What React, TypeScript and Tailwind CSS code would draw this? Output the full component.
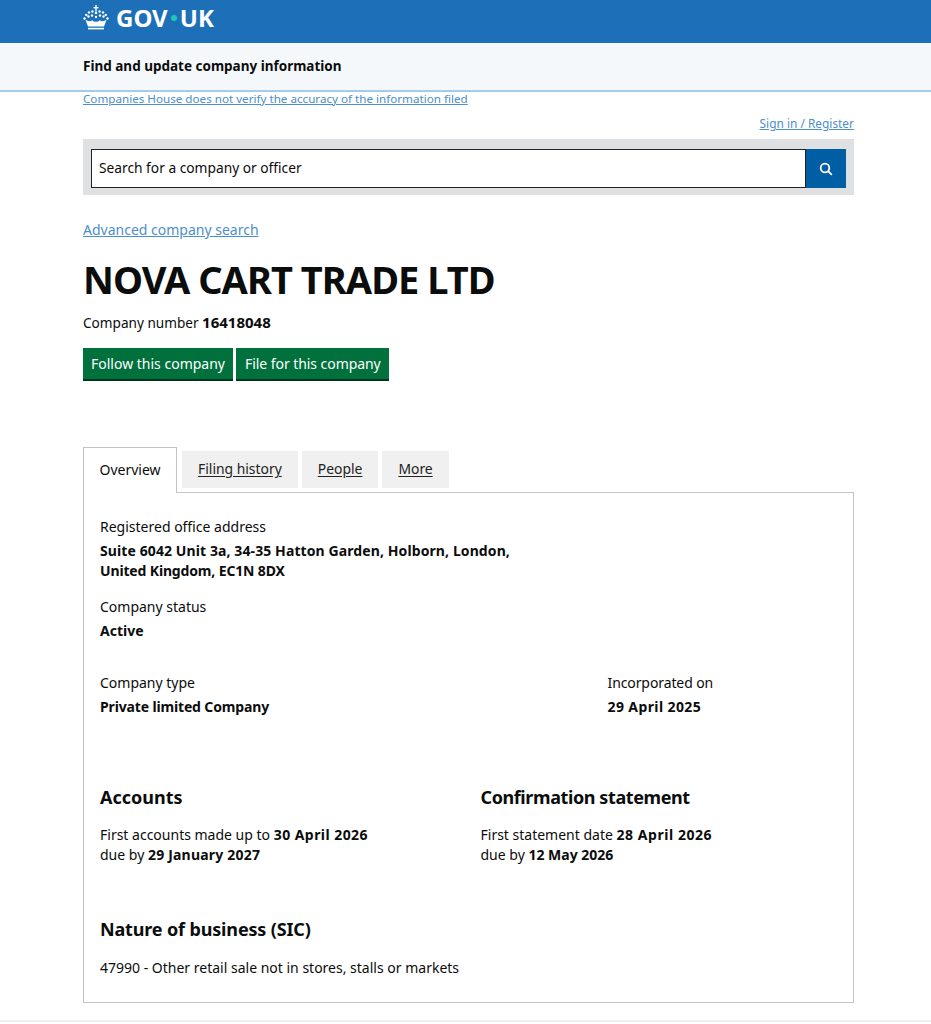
import React from "react";

const font = { fontFamily: '"Noto Sans", Arial, sans-serif' };

const Crown = () => (
  <svg width="26" height="26" viewBox="0 0 26 26" fill="white" aria-hidden="true">
    <rect x="12.300" y="0" width="1.400" height="6.500" />
    <rect x="10.500" y="2" width="5" height="1.400" />
    <circle cx="13" cy="8" r="1.200" />
    <circle cx="9.500" cy="6.500" r="1.200" />
    <circle cx="16.500" cy="6.500" r="1.200" />
    <circle cx="6" cy="7.500" r="1.200" />
    <circle cx="20" cy="7.500" r="1.200" />
    <circle cx="3.300" cy="10" r="1.200" />
    <circle cx="22.700" cy="10" r="1.200" />
    <circle cx="1.500" cy="13.500" r="1.200" />
    <circle cx="24.500" cy="13.500" r="1.200" />
    <circle cx="9" cy="10.500" r="1.200" />
    <circle cx="17" cy="10.500" r="1.200" />
    <circle cx="13" cy="12" r="1.200" />
    <circle cx="5.500" cy="11.500" r="1.200" />
    <circle cx="20.500" cy="11.500" r="1.200" />
    <path d="M2.500 15c3 1.500 5 1.500 7 .2.800 1 2 1.600 3.500 1.600s2.700-.6 3.500-1.600c2 1.300 4 1.300 7-.2l-2.500 6.500h-16z" />
    <rect x="5" y="22.800" width="16" height="1.600" />
  </svg>
);

const Tab = ({ label }: { label: string }) => (
  <a className="flex h-[37px] items-center bg-[#f0f0f0] px-[16px] pb-[1px] text-[13.900px] text-[#222] underline underline-offset-2">
    {label}
  </a>
);

const App = () => {
  return (
    <div className="min-h-[1024px] bg-white text-[#0b0c0c]" style={font}>
      <header className="h-[43px] bg-[#1d70b8] pl-[83px]">
        <div className="flex h-[36px] items-center text-white">
          <Crown />
          <span className="ml-[7px] text-[24px] font-bold leading-none">GOV</span>
          <span className="mx-[3px] h-[6px] w-[6px] rounded-full bg-[#1fc8b4]" />
          <span className="text-[24px] font-bold leading-none">UK</span>
        </div>
      </header>
      <div className="flex h-[47px] items-center bg-[#f4f8fb] pl-[83px] text-[13.500px] font-bold">
        Find and update company information
      </div>
      <div className="h-[2px] bg-[#a4cbec]" />

      <main className="ml-[83px] mr-[77px]">
        <a className="-mt-px block text-[11.650px] leading-[16px] text-[#4c8fca] underline">
          Companies House does not verify the accuracy of the information filed
        </a>
        <div className="mt-[8px] text-right text-[11.900px] leading-[16px] text-[#4c8fca] underline">
          Sign in / Register
        </div>
        <div className="mt-[8px] flex h-[56px] items-start bg-[#dee0e2] px-2 pt-[10px]">
          <div className="flex h-[39px] flex-1 items-center border border-[#222] bg-white pl-[7px] pb-[1px] text-[13.750px]">
            Search for a company or officer
          </div>
          <button className="flex h-[39px] w-[40px] items-center justify-center bg-[#005ea5]">
            <svg width="14" height="14" viewBox="0 0 14 14" fill="none" stroke="white" strokeWidth="1.800">
              <circle cx="6" cy="6" r="4.300" />
              <path d="M9.200 9.200L12.800 12.800" />
            </svg>
          </button>
        </div>
        <a className="mt-[25px] block text-[14px] leading-[20px] text-[#4c8fca] underline">Advanced company search</a>
        <h1 className="mt-[17px] text-[38px] font-bold leading-[44px] tracking-tight">NOVA CART TRADE LTD</h1>
        <p className="mt-[11px] text-[13.600px] leading-[20px]">
          Company number <strong className="text-[15px]">16418048</strong>
        </p>
        <div className="mt-[15px] flex gap-[3px]">
          <a className="flex h-[33px] items-center border-b-2 border-[#003618] bg-[#00703c] px-2 pb-[1px] text-[14px] text-white">Follow this company</a>
          <a className="flex h-[33px] items-center border-b-2 border-[#003618] bg-[#00703c] pl-[9px] pr-2 pb-[1px] text-[14px] tracking-[-0.06px] text-white">File for this company</a>
        </div>

        <nav className="relative z-10 mt-[66px] flex items-start">
          <div className="mb-[-1px] flex h-[46px] w-[94px] items-center justify-center border border-b-0 border-[#c4c4c4] bg-white pb-[2px] text-[14px]">
            Overview
          </div>
          <div className="ml-[5px] mt-1 flex gap-1">
            <Tab label="Filing history" />
            <Tab label="People" />
            <Tab label="More" />
          </div>
        </nav>

        <section className="h-[511px] border border-[#c4c4c4] px-4 pt-6 text-[14px] leading-[20px]">
          <p>Registered office address</p>
          <p className="mt-1 font-bold">
            <span className="tracking-[0.1px]">Suite 6042 Unit 3a, 34-35 Hatton Garden, Holborn, London,</span>
            <br />
            <span className="tracking-[-0.15px]">United Kingdom, EC1N 8DX</span>
          </p>
          <p className="mt-[16px]">Company status</p>
          <p className="mt-1 font-bold">Active</p>
          <div className="mt-[32px] grid grid-cols-[507.500px_1fr]">
            <div>
              <p>Company type</p>
              <p className="mt-1 font-bold tracking-[-0.15px]">Private limited Company</p>
            </div>
            <div>
              <p className="tracking-[-0.1px]">Incorporated on</p>
              <p className="mt-1 font-bold tracking-[0.4px]">29 April 2025</p>
            </div>
          </div>
          <div className="mt-[68px] grid grid-cols-[380.500px_1fr]">
            <div>
              <h2 className="text-[18px] font-bold leading-[24px]">Accounts</h2>
              <p className="mt-[16px]">
                First accounts made up to <strong className="tracking-[0.45px]">30 April 2026</strong>
                <br />
                due by <strong className="tracking-[0.2px]">29 January 2027</strong>
              </p>
            </div>
            <div>
              <h2 className="text-[18px] font-bold leading-[24px] tracking-[-0.4px]">Confirmation statement</h2>
              <p className="mt-[16px]">
                First statement date <strong className="tracking-[0.55px]">28 April 2026</strong>
                <br />
                due by <strong>12 May 2026</strong>
              </p>
            </div>
          </div>
          <h2 className="mt-[52px] text-[18px] font-bold leading-[24px] tracking-[-0.15px]">Nature of business (SIC)</h2>
          <p className="mt-[17px]">47990 - Other retail sale not in stores, stalls or markets</p>
        </section>
      </main>
      <div className="mt-[17px] h-[2px] bg-[#f0f0f0]" />
    </div>
  );
};

export default App;
